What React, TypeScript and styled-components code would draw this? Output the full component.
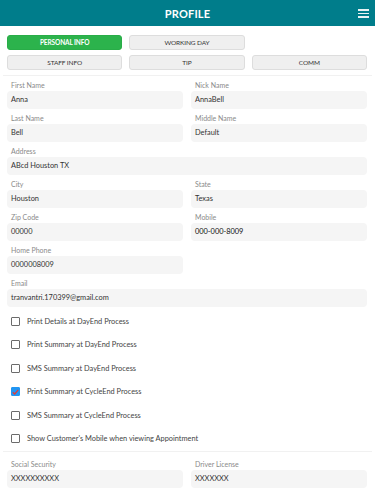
import React from 'react';
import styled, { createGlobalStyle } from 'styled-components';

const GlobalStyle = createGlobalStyle`
  body {
    margin: 0;
    background: #ffffff;
    font-family: Lato, 'Open Sans', sans-serif;
  }
`;

type Field = { label: string; value: string; wide?: boolean; strong?: boolean };

const fields: (Field | null)[] = [
  { label: 'First Name', value: 'Anna' },
  { label: 'Nick Name', value: 'AnnaBell' },
  { label: 'Last Name', value: 'Bell' },
  { label: 'Middle Name', value: 'Default' },
  { label: 'Address', value: 'ABcd Houston TX', wide: true },
  { label: 'City', value: 'Houston' },
  { label: 'State', value: 'Texas' },
  { label: 'Zip Code', value: '00000' },
  { label: 'Mobile', value: '000-000-8009', strong: true },
  { label: 'Home Phone', value: '0000008009' },
  null,
  { label: 'Email', value: 'tranvantri.170399@gmail.com', wide: true },
];

const options = [
  { text: 'Print Details at DayEnd Process', checked: false },
  { text: 'Print Summary at DayEnd Process', checked: false },
  { text: 'SMS Summary at DayEnd Process', checked: false },
  { text: 'Print Summary at CycleEnd Process', checked: true },
  { text: 'SMS Summary at CycleEnd Process', checked: false },
  { text: "Show Customer's Mobile when viewing Appointment", checked: false },
];

const tabs = [
  { name: 'PERSONAL INFO', active: true },
  { name: 'WORKING DAY' },
  null,
  { name: 'STAFF INFO' },
  { name: 'TIP' },
  { name: 'COMM' },
];

function App() {
  return (
    <Page>
      <GlobalStyle />
      <Header>
        <Title>PROFILE</Title>
        <Menu>
          <MenuLine />
          <MenuLine />
          <MenuLine />
        </Menu>
      </Header>

      <Tabs>
        {tabs.map((t, i) =>
          t ? (
            <Tab key={i} $active={!!t.active}>{t.name}</Tab>
          ) : (
            <div key={i} />
          )
        )}
      </Tabs>

      <Divider />

      <Form>
        {fields.map((f, i) =>
          f ? (
            <FieldBox key={i} $wide={!!f.wide}>
              <Label>{f.label}</Label>
              <Input $strong={!!f.strong}>{f.value}</Input>
            </FieldBox>
          ) : (
            <div key={i} />
          )
        )}
      </Form>

      <Checks>
        {options.map((o) => (
          <CheckRow key={o.text}>
            <Box $checked={o.checked}>
              {o.checked && (
                <svg width="7" height="6" viewBox="0 0 7 6">
                  <path d="M0.8 3.2 L2.7 5 L6.2 0.8" fill="none" stroke="#e53935" strokeWidth="1.2" />
                </svg>
              )}
            </Box>
            <CheckText>{o.text}</CheckText>
          </CheckRow>
        ))}
      </Checks>

      <Divider />

      <Form $top={6}>
        <FieldBox>
          <Label>Social Security</Label>
          <Input>XXXXXXXXXX</Input>
        </FieldBox>
        <FieldBox>
          <Label>Driver License</Label>
          <Input>XXXXXXX</Input>
        </FieldBox>
      </Form>
    </Page>
  );
}

export default App;

const Page = styled.div`
  width: 375px;
  height: 500px;
  overflow: hidden;
`;

const Header = styled.div`
  position: relative;
  height: 26px;
  background-color: #007d8b;
  display: flex;
  align-items: center;
  justify-content: center;
`;

const Title = styled.div`
  color: #ffffff;
  font-weight: 700;
  font-size: 11px;
  letter-spacing: 0.2px;
`;

const Menu = styled.div`
  position: absolute;
  right: 6px;
  top: 9px;
  width: 11px;
  display: flex;
  flex-direction: column;
  gap: 2px;
`;

const MenuLine = styled.span`
  display: block;
  height: 1.5px;
  background: #e8f2f3;
`;

const Tabs = styled.div`
  display: grid;
  grid-template-columns: repeat(3, 1fr);
  gap: 5px 7px;
  padding: 9px 8px 5px 7px;
`;

const Tab = styled.div<{ $active?: boolean }>`
  height: 15px;
  box-sizing: border-box;
  border-radius: 3px;
  border: 1px solid ${(p) => (p.$active ? '#29ad48' : '#dddddd')};
  background-color: ${(p) => (p.$active ? '#2cb34c' : '#efefef')};
  color: ${(p) => (p.$active ? '#ffffff' : '#333333')};
  font-size: 6.5px;
  font-weight: ${(p) => (p.$active ? 700 : 400)};
  letter-spacing: -0.1px;
  display: flex;
  align-items: center;
  justify-content: center;
`;

const Divider = styled.div`
  height: 1px;
  margin: 0 3px;
  background-color: #f1f1f1;
`;

const Form = styled.div<{ $top?: number }>`
  display: grid;
  grid-template-columns: 1fr 1fr;
  column-gap: 8px;
  padding: ${(p) => p.$top ?? 3}px 8px 0 7px;
`;

const FieldBox = styled.div<{ $wide?: boolean }>`
  grid-column: ${(p) => (p.$wide ? '1 / span 2' : 'auto')};
  margin-bottom: 3px;
`;

const Label = styled.div`
  height: 12px;
  line-height: 12px;
  padding-left: 4px;
  font-size: 7px;
  color: #8a8a8a;
`;

const Input = styled.div<{ $strong?: boolean }>`
  height: 18px;
  line-height: 18px;
  padding-left: 4px;
  border-radius: 4px;
  background-color: #f5f5f5;
  font-size: 7.4px;
  color: ${(p) => (p.$strong ? '#111111' : '#333333')};
`;

const Checks = styled.div`
  padding: 0 8px 0 11px;
  margin-top: -0.5px;
`;

const CheckRow = styled.div`
  height: 23.5px;
  display: flex;
  align-items: center;
`;

const Box = styled.div<{ $checked?: boolean }>`
  width: 9px;
  height: 9px;
  box-sizing: border-box;
  border-radius: 1px;
  border: 1px solid ${(p) => (p.$checked ? '#2196f3' : '#6b6b6b')};
  background-color: ${(p) => (p.$checked ? '#2196f3' : '#ffffff')};
  display: flex;
  align-items: center;
  justify-content: center;
  margin-right: 7px;
`;

const CheckText = styled.div`
  font-size: 7.4px;
  color: #444444;
`;
